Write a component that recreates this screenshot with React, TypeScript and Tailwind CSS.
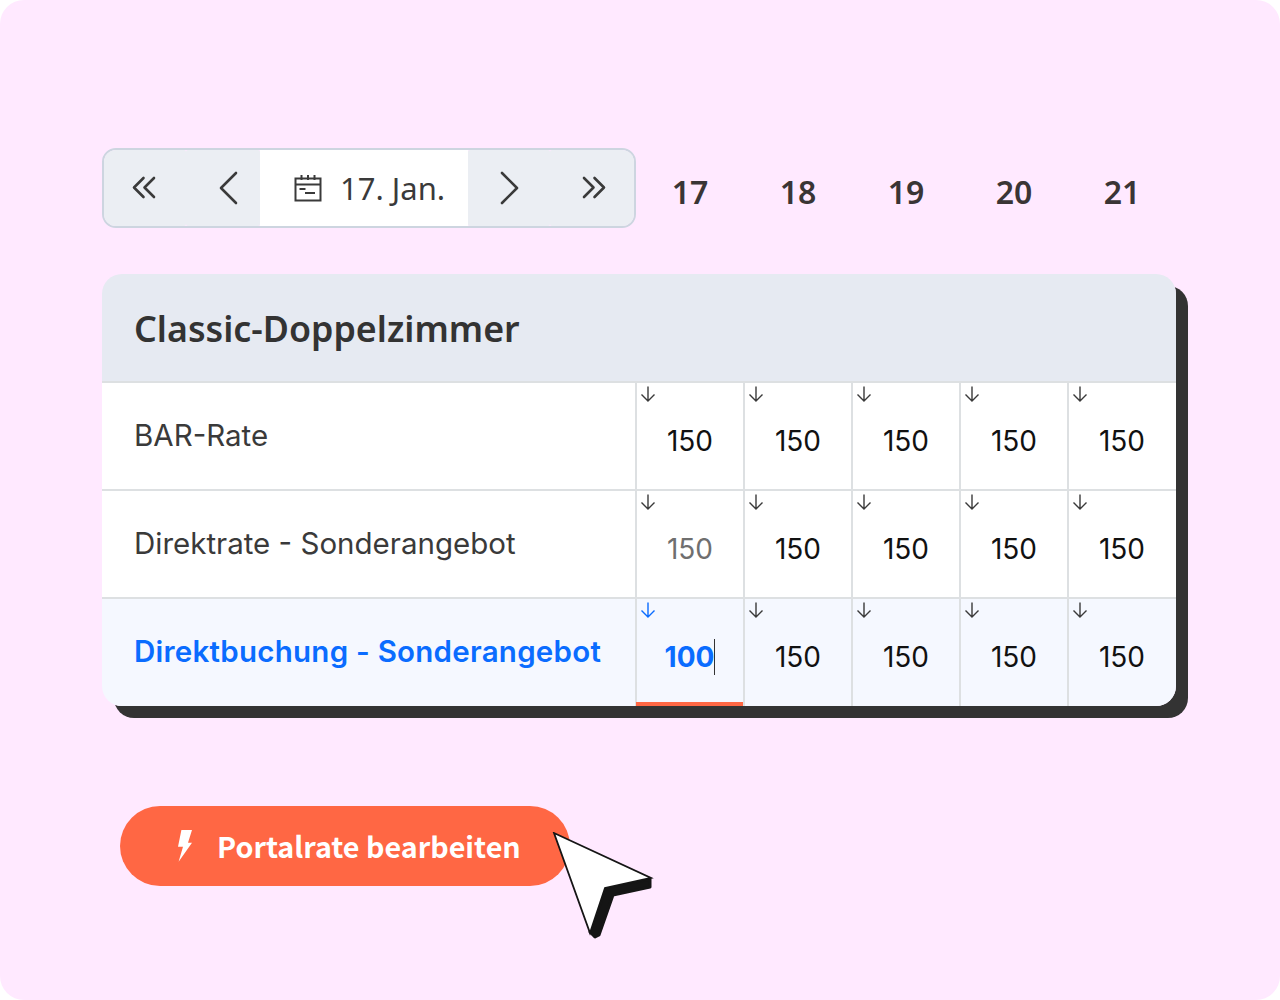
const sans = "font-['Noto_Sans',sans-serif]";
const cellFont = "font-['Inter','Liberation_Sans',sans-serif]";

const dates = [17, 18, 19, 20, 21];

const rates = [
  { name: "BAR-Rate", values: ["150", "150", "150", "150", "150"] },
  { name: "Direktrate - Sonderangebot", values: ["150", "150", "150", "150", "150"], muted: true },
  { name: "Direktbuchung - Sonderangebot", values: ["100", "150", "150", "150", "150"], active: true },
];

function ArrowDown({ blue }: { blue?: boolean }) {
  return (
    <svg width="16" height="16" viewBox="0 0 16 16" fill="none" className={blue ? "text-[#0a6cff]" : "text-[#3a3a3a]"}>
      <path d="M8 0.5V15M1.5 8.5 8 15l6.5-6.5" stroke="currentColor" strokeWidth="1.4" />
    </svg>
  );
}

function Chevron({ d, w, h }: { d: string; w: number; h: number }) {
  return (
    <svg width={w} height={h} viewBox={`0 0 ${w} ${h}`} fill="none" className="text-[#3a3a3a]">
      <path d={d} stroke="currentColor" strokeWidth="2.6" strokeLinecap="round" strokeLinejoin="round" />
    </svg>
  );
}

function CalendarIcon() {
  return (
    <svg width="28" height="28" viewBox="0 0 28 28" fill="none" className="text-[#3a3a3a]">
      <path
        d="M1.5 4.5h25v22h-25zM1.5 10.5h25M7.5 1v5M14 1v5M20.5 1v5M5.5 15h6M11 19h10"
        stroke="currentColor"
        strokeWidth="2"
      />
    </svg>
  );
}

export default function App() {
  return (
    <div className="w-[1280px] h-[1000px] bg-white">
      <div className={`w-full h-full bg-[#ffe9ff] rounded-[24px] pt-[148px] pl-[102px] ${sans}`}>
        {/* Date navigation */}
        <div className="flex">
          <div className="flex w-[534px] h-[80px] rounded-[14px] border-2 border-[#cdd5e0] overflow-hidden text-[#3a3a3a]">
            <div className="w-[82px] rounded-[2px] bg-[#ebeef3] flex items-center pl-[28px]">
              <Chevron w={24} h={24} d="M11.5 2 2 11.5 11.5 21M22 2 12.5 11.5 22 21" />
            </div>
            <div className="w-[74px] rounded-[2px] bg-[#ebeef3] flex items-center pl-[32px]">
              <Chevron w={20} h={34} d="M18 2 3 17l15 15" />
            </div>
            <div className="w-[208px] bg-white flex items-center pl-[34px] gap-[18px]">
              <CalendarIcon />
              <span className="text-[31px] leading-none">17. Jan.</span>
            </div>
            <div className="w-[82px] rounded-[2px] bg-[#ebeef3] flex items-center pl-[32px]">
              <Chevron w={20} h={34} d="M2 2l15 15L2 32" />
            </div>
            <div className="flex-1 rounded-[2px] bg-[#ebeef3] flex items-center pl-[32px]">
              <Chevron w={24} h={24} d="M2 2l9.5 9.5L2 21M12.5 2 22 11.5 12.5 21" />
            </div>
          </div>
          <div className="flex">
            {dates.map((d) => (
              <div key={d} className="w-[108px] h-[80px] pt-[8px] flex items-center justify-center text-[32px] font-semibold text-[#3a3535]">
                {d}
              </div>
            ))}
          </div>
        </div>

        {/* Rate table */}
        <div className="mt-[46px] w-[1074px] rounded-[20px] overflow-hidden shadow-[12px_12px_0_0_#333333]">
          <div className="h-[107px] bg-[#e6eaf2] flex items-center pl-[32px] pt-[3px] text-[35.8px] font-semibold text-[#333333]">
            Classic-Doppelzimmer
          </div>
          {rates.map((rate) => (
            <div
              key={rate.name}
              className={`flex border-t-2 border-[#dde0e2] ${rate.active ? "h-[109px] bg-[#f5f8ff]" : "h-[108px] bg-white"}`}
            >
              <div
                className={`w-[533px] flex items-center pl-[32px] pb-[2px] text-[29.5px] ${cellFont} ${
                  rate.active ? "font-semibold tracking-[0.25px] text-[#0a6cff]" : "text-[#3a3a3a]"
                }`}
              >
                {rate.name}
              </div>
              {rate.values.map((v, i) => (
                <div
                  key={i}
                  className={`relative w-[108px] border-l-2 border-[#dde0e2] flex items-center justify-center text-[28px] ${cellFont} ${
                    rate.active ? "pt-[9px]" : "pt-[10px]"
                  } ${rate.muted && i === 0 ? "text-[#6f6f6f]" : "text-[#111111]"}`}
                >
                  <span className="absolute left-[3px] top-[3px]">
                    <ArrowDown blue={rate.active && i === 0} />
                  </span>
                  {rate.active && i === 0 ? (
                    <>
                      <span className="font-bold text-[#0a6cff]">{v}</span>
                      <span className="w-px h-[36px] bg-[#333333]" />
                      <span className="absolute left-[-1px] right-[-1px] bottom-0 h-[4px] bg-[#ff6744]" />
                    </>
                  ) : (
                    v
                  )}
                </div>
              ))}
            </div>
          ))}
        </div>

        {/* Action button */}
        <div className="relative mt-[100px] ml-[18px] w-[450px] h-[80px] rounded-full bg-[#ff6744] flex items-center text-white">
          <svg width="16" height="32" viewBox="0 0 16 32" className="ml-[57px]">
            <path d="M4.4 0H15L11 12.7h4L1.6 31.7 6 16.7H1z" fill="currentColor" />
          </svg>
          <span className="ml-[24px] text-[28.7px] font-bold font-['Noto_Sans_CJK_JP','Noto_Sans',sans-serif]">
            Portalrate bearbeiten
          </span>
          {/* Cursor */}
          <svg width="104" height="110" viewBox="0 0 104 110" fill="none" className="absolute left-[432px] top-[26px]">
            <path d="M54 56 98 47V55L61 63 47 103 43 105 38 100Z" fill="#151515" stroke="#151515" strokeWidth="3" strokeLinejoin="round" />
            <path d="M2 1 99 46 53 56 38 101Z" fill="white" stroke="#151515" strokeWidth="1.8" strokeLinejoin="miter" />
          </svg>
        </div>
      </div>
    </div>
  );
}
